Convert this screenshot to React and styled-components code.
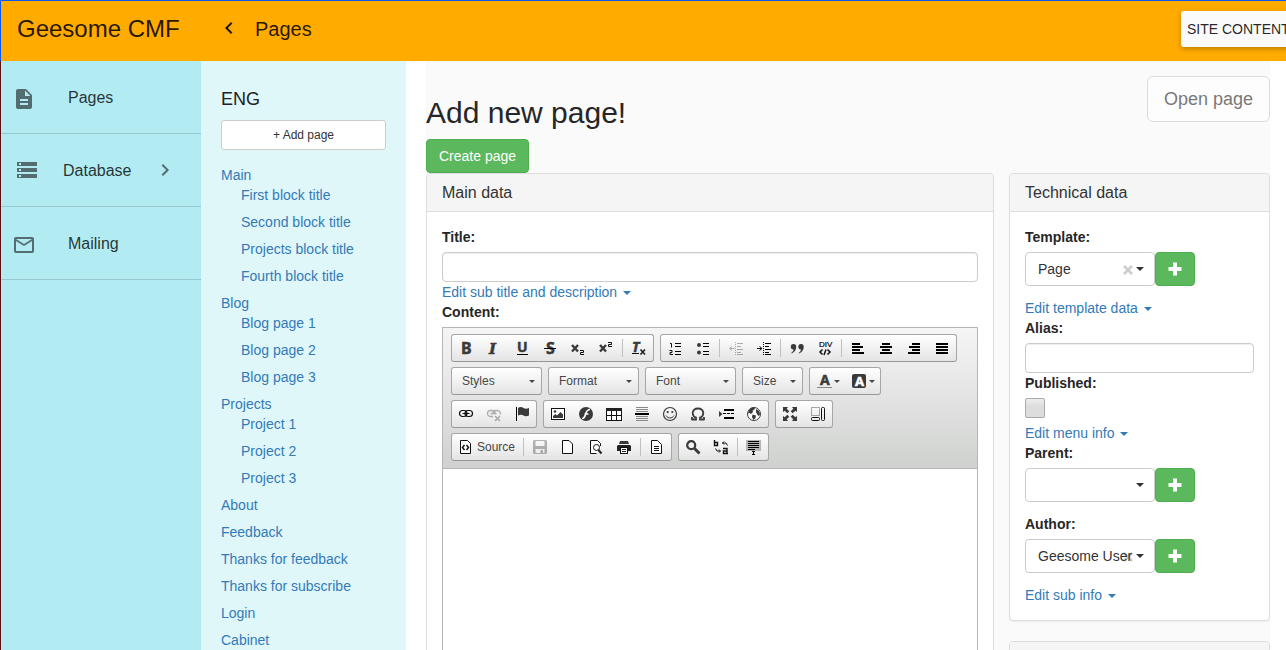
import React from "react";
import styled, { createGlobalStyle, css } from "styled-components";
import {
  MdChevronLeft,
  MdChevronRight,
  MdDescription,
  MdMailOutline,
  MdStorage,
} from "react-icons/md";

const GlobalStyle = createGlobalStyle`
  *, *::before, *::after { box-sizing: border-box; }
  body {
    margin: 0;
    background: #fff;
    color: #333;
    font: 14px/20px "Liberation Sans", Arial, sans-serif;
  }
  button, input, select, textarea { font: inherit; color: inherit; }
`;

/* ---------- shell ---------- */

const Shell = styled.div`
  display: flex;
  flex-direction: column;
  height: 100vh;
  overflow: hidden;
`;

const Header = styled.header`
  display: flex;
  flex: none;
  align-items: flex-start;
  height: 61px;
  overflow: hidden;
  border-top: 1px solid #0a58f5;
  border-left: 1px solid #0a58f5;
  background: #ffab00;
  color: rgba(0, 0, 0, 0.87);
`;

const Brand = styled.div`
  flex: 0 0 200px;
  padding-left: 16px;
  font-size: 24px;
  line-height: 56px;
`;

const BackButton = styled.button`
  display: flex;
  margin: 15px 14px 0 16px;
  padding: 0;
  border: 0;
  background: none;
  font-size: 24px;
`;

const HeaderTitle = styled.h1`
  flex: 1;
  margin: 0;
  font-size: 20px;
  font-weight: 400;
  line-height: 56px;
`;

const HeaderActions = styled.div`
  flex: 0 0 105px;
  min-width: 0;
  padding-top: 10px;
`;

const RaisedButton = styled.button`
  height: 36px;
  padding: 0 6px;
  border: 0;
  border-radius: 3px;
  background: #fafafa;
  box-shadow: 0 2px 5px rgba(0, 0, 0, 0.26);
  color: rgba(0, 0, 0, 0.87);
  white-space: nowrap;
`;

const Body = styled.div`
  display: flex;
  flex: 1;
  min-height: 0;
  border-left: 1px solid #5c1212;
`;

const scrollColumn = css`
  overflow-y: auto;
  scrollbar-width: none;
`;

/* ---------- primary navigation ---------- */

const Sidebar = styled.nav`
  flex: 0 0 200px;
  background: #b2ebf2;
  ${scrollColumn}
`;

const SideLink = styled.a`
  display: flex;
  align-items: center;
  height: 73px;
  padding-left: ${(p) => (p.$expandable ? 14 : 11)}px;
  border-bottom: 1px solid rgba(0, 0, 0, 0.14);
  color: rgba(0, 0, 0, 0.8);
  font-size: 16px;
  text-decoration: none;

  svg {
    flex: none;
    width: 24px;
    height: 24px;
    color: rgba(0, 0, 0, 0.54);
  }
`;

const SideIcon = styled.span`
  display: flex;
  padding-top: ${(p) => (p.$expandable ? 0 : 4)}px;
  margin-right: ${(p) => (p.$expandable ? 24 : 32)}px;
`;

const SideLabel = styled.span`
  width: 90px;
  padding-top: 2px;
`;

/* ---------- page tree ---------- */

const Tree = styled.nav`
  flex: 0 0 205px;
  padding: 28px 20px 0;
  background: #e0f7fa;
  ${scrollColumn}
`;

const TreeHeading = styled.h2`
  margin: 0 0 11px;
  color: #212121;
  font-size: 18px;
  font-weight: 400;
  line-height: 20px;
`;

const AddPageButton = styled.button`
  display: block;
  width: 100%;
  height: 30px;
  margin-bottom: 15px;
  border: 1px solid #ccc;
  border-radius: 3px;
  background: #fff;
  font-size: 12px;
  line-height: 18px;
`;

const TreeList = styled.ul`
  margin: 0;
  padding: 0 0 0 ${(p) => (p.$nested ? 20 : 0)}px;
  list-style: none;
`;

const TreeLink = styled.a`
  display: block;
  margin-bottom: ${(p) => (p.$parent ? 0 : 7)}px;
  color: #337ab7;
  text-decoration: none;
`;

/* ---------- content ---------- */

const Main = styled.main`
  flex: 1;
  min-width: 0;
  padding: 0 16px 0 20px;
  ${scrollColumn}
`;

const Content = styled.div`
  min-height: 100%;
  padding-top: 15px;
  background: #fafafa;
`;

const Intro = styled.div`
  display: flex;
  align-items: flex-start;
  justify-content: space-between;
`;

const PageTitle = styled.h2`
  margin: 20px 0 10px;
  color: #262626;
  font-size: 30px;
  font-weight: 400;
  line-height: 33px;
`;

const GreenButton = styled.button`
  display: flex;
  align-items: center;
  justify-content: center;
  min-width: 40px;
  height: 34px;
  padding: 0 12px;
  border: 1px solid #4cae4c;
  border-radius: 4px;
  background: #5cb85c;
  color: #fff;
`;

const OpenButton = styled.button`
  height: 46px;
  padding: 0 16px;
  border: 1px solid #ccc;
  border-radius: 6px;
  background: #fff;
  font-size: 18px;
  opacity: 0.65;
`;

const Columns = styled.div`
  display: grid;
  grid-template-columns: minmax(0, 1fr) 261px;
  gap: 15px;
  align-items: start;
`;

const Panel = styled.section`
  margin-bottom: 20px;
  border: 1px solid #ddd;
  border-radius: 4px;
  background: #fff;
  box-shadow: 0 1px 1px rgba(0, 0, 0, 0.05);
`;

const PanelHeading = styled.h3`
  min-height: 38px;
  margin: 0;
  padding: 10px 15px;
  border-bottom: 1px solid #ddd;
  border-radius: 3px 3px 0 0;
  background: #f5f5f5;
  font-size: 16px;
  font-weight: 400;
  line-height: 17px;
`;

const PanelBody = styled.div`
  padding: 15px;
`;

const Label = styled.label`
  display: block;
  margin-bottom: 5px;
  color: #262626;
  font-weight: 700;
`;

const TextInput = styled.input`
  display: block;
  width: 100%;
  height: 30px;
  padding: 4px 12px;
  border: 1px solid #ccc;
  border-radius: 4px;
  background: #fff;
  box-shadow: inset 0 1px 1px rgba(0, 0, 0, 0.075);
`;

const CheckBox = styled.input`
  display: block;
  appearance: none;
  width: 20px;
  height: 20px;
  margin: 0 0 5px;
  border: 1px solid #aaa;
  border-radius: 2px;
  background: linear-gradient(#eee, #ddd 40%, #ddd);
`;

const Caret = styled.span`
  display: inline-block;
  margin-left: 2px;
  vertical-align: middle;
  border-top: 4px solid;
  border-right: 4px solid transparent;
  border-left: 4px solid transparent;
`;

const Toggle = styled.a`
  display: block;
  color: #337ab7;
  text-decoration: none;
`;

const PickerRow = styled.div`
  display: flex;
  margin-bottom: 12px;
`;

const PickerBox = styled.div`
  position: relative;
  width: 130px;
  height: 34px;
  border: 1px solid #ccc;
  border-radius: 4px;
  background: #fff;

  > ${Caret} {
    position: absolute;
    top: 14px;
    right: 10px;
    pointer-events: none;
  }
`;

const Picker = styled.select`
  position: relative;
  appearance: none;
  width: 100%;
  height: 32px;
  padding: 0 20px 0 12px;
  border: 0;
  background: none;
`;

const ClearButton = styled.button`
  position: absolute;
  top: 11px;
  right: 20px;
  display: flex;
  padding: 0;
  border: 0;
  background: none;
  color: #ccc;
`;

/* ---------- rich text editor ---------- */

const Editor = styled.div`
  border: 1px solid #b6b6b6;
`;

const EditorToolbar = styled.div`
  display: flex;
  flex-direction: column;
  gap: 5px;
  padding: 6px 8px 7px;
  border-bottom: 1px solid #b6b6b6;
  background: linear-gradient(#f5f5f5, #cfd1cf);
`;

const ToolRow = styled.div`
  display: flex;
  gap: 6px;
`;

const ToolGroup = styled.div`
  display: flex;
  align-items: center;
  height: 28px;
  border: 1px solid #a6a6a6;
  border-bottom-color: #979797;
  border-radius: 3px;
  background: linear-gradient(#fff, #e4e4e4);
`;

const ToolButton = styled.button`
  display: flex;
  align-items: center;
  gap: 3px;
  height: 26px;
  padding: 0 6px;
  border: 0;
  background: none;
  color: #474747;
  font-size: 12px;

  svg { flex: none; width: 16px; height: 16px; overflow: visible; }
  &:disabled svg { opacity: 0.3; }
`;

const ToolDivider = styled.span`
  width: 1px;
  height: 18px;
  margin: 0 2px;
  background: #c0c0c0;
`;

const Combo = styled(ToolGroup)`
  width: ${(p) => p.$width}px;
  padding-right: 6px;
`;

const ComboSelect = styled.select`
  appearance: none;
  flex: 1;
  min-width: 0;
  height: 26px;
  padding: 0 0 0 10px;
  border: 0;
  background: none;
  color: #474747;
  font-size: 12px;
`;

const SmallArrow = styled.span`
  border-top: 3px solid #474747;
  border-right: 3px solid transparent;
  border-left: 3px solid transparent;
`;

const EditorArea = styled.textarea`
  display: block;
  width: 100%;
  height: 300px;
  padding: 20px;
  border: 0;
  outline: 0;
  resize: none;
`;

/* ---------- toolbar drawings, on a 16 × 16 grid ---------- */

const dark = "#3a3a3a";

const Letter = styled.text`
  font-family: ${(p) => (p.$serif ? '"DejaVu Serif", serif' : '"Noto Sans", sans-serif')};
  font-size: ${(p) => p.$size}px;
  font-style: ${(p) => (p.$italic ? "italic" : "normal")};
  font-weight: 700;
  line-height: 1;
  fill: ${(p) => p.$fill || dark};
  stroke: ${(p) => p.$fill || dark};
  stroke-width: 0.5px;
`;

const SmallLetters = styled.text`
  font-family: "Liberation Sans", sans-serif;
  font-size: 8px;
  line-height: 1;
  fill: #000;
  stroke: #000;
  stroke-width: 0.2px;
`;

const bars = (rows, fill = "#000", h = 2) =>
  rows.map(([x, y, w]) => <rect key={`${x}-${y}`} x={x} y={y} width={w} height={h} fill={fill} />);

const line = { fill: "none", stroke: "#111", strokeWidth: 1 };

const indentLines = (
  <>
    <path d="M7.5 2v13" stroke="#000" strokeDasharray="1 1" />
    {bars([[9, 3, 6], [9, 6, 4], [9, 9, 6], [9, 12, 4]], "#000", 1)}
    {bars([[9, 14, 6]], "#000", 1)}
  </>
);

const glyphs = {
  bold: <Letter x="3" y="14" $size={16}>B</Letter>,
  italic: <Letter x="3" y="14" $size={15} $serif $italic>I</Letter>,
  underline: (
    <>
      <Letter x="3" y="12" $size={14}>U</Letter>
      <rect x="3" y="14" width="11" height="1" fill="#000" />
    </>
  ),
  strike: (
    <>
      <Letter x="4" y="14" $size={16}>S</Letter>
      <rect x="2" y="8" width="12" height="1" fill="#000" />
    </>
  ),
  sub: (
    <>
      <path d="M2 5l6 6.500M8 5l-6 6.500" stroke={dark} strokeWidth="2.400" fill="none" />
      <path d="M10 10.500h3.500v2h-3v2H14" {...line} />
    </>
  ),
  sup: (
    <>
      <path d="M2 5l6 6.500M8 5l-6 6.500" stroke={dark} strokeWidth="2.400" fill="none" />
      <path d="M10 2.500h3.500v2h-3v2H14" {...line} />
    </>
  ),
  clear: (
    <>
      <Letter x="1" y="12" $size={14} $italic>T</Letter>
      <rect x="1" y="13" width="7" height="1" fill="#111" />
      <path d="M9.500 9.500l4.500 5M14 9.500l-4.500 5" stroke="#222" strokeWidth="1.700" />
    </>
  ),
  ordered: (
    <>
      <path d="M3 3.500h1.500v4M2.500 10.500h2.500v2h-2v2h3" {...line} />
      {bars([[8, 3, 6], [8, 6, 6], [8, 11, 6], [8, 14, 6]], "#000", 1)}
    </>
  ),
  unordered: (
    <>
      <circle cx="4" cy="5" r="2" fill={dark} />
      <circle cx="4" cy="12.500" r="2" fill={dark} />
      {bars([[8, 3, 6], [8, 6, 6], [8, 11, 6], [8, 14, 6]], "#000", 1)}
    </>
  ),
  outdent: (
    <>
      {indentLines}
      <path d="M1.500 8.500h5M4 6.500l-2.500 2 2.500 2" {...line} />
    </>
  ),
  indent: (
    <>
      {indentLines}
      <path d="M1 8.500h5M3.500 6.500l2.500 2-2.500 2" {...line} />
    </>
  ),
  quote: (
    <path
      d="M4.500 4a2.700 2.700 0 0 1 2.700 2.900c0 3-1.600 5-4.500 6.600l-.5-.7c1.400-1 2.200-2 2.300-3.400A2.700 2.700 0 0 1 4.500 4zM12 4a2.700 2.700 0 0 1 2.700 2.900c0 3-1.600 5-4.500 6.600l-.5-.7c1.400-1 2.200-2 2.300-3.400A2.700 2.700 0 0 1 12 4z"
      fill={dark}
    />
  ),
  div: (
    <>
      <SmallLetters x="2" y="7">DIV</SmallLetters>
      <path d="M5.500 9.500L3 12l2.500 2.500M10.500 9.500L13 12l-2.500 2.500M9 9.500l-2 5.500" {...line} strokeWidth="1.500" />
    </>
  ),
  left: bars([[2, 3, 8], [2, 6, 11], [2, 9, 8], [2, 12, 12]]),
  center: bars([[4, 3, 8], [2, 6, 12], [4, 9, 8], [2, 12, 12]]),
  right: bars([[6, 3, 8], [3, 6, 11], [6, 9, 8], [2, 12, 12]]),
  justify: bars([[2, 3, 12], [2, 6, 12], [2, 9, 12], [2, 12, 12]]),
  link: (
    <>
      <rect x="1.500" y="4.500" width="7.500" height="6" rx="3" fill="none" stroke="#111" strokeWidth="1.200" />
      <rect x="7" y="4.500" width="7.500" height="6" rx="3" fill="none" stroke="#111" strokeWidth="1.200" />
      <path d="M4.500 7.500h7" stroke="#111" strokeWidth="1" />
    </>
  ),
  unlink: (
    <>
      <path d="M7 10.500H4.500a3 3 0 0 1 0-6h1.500a3 3 0 0 1 3 3M7 7.500a3 3 0 0 1 3-3h1.500a3 3 0 0 1 2.800 4M4.500 7.500h6" fill="none" stroke="#111" strokeWidth="1.300" />
      <path d="M9 10l5 5M14 10l-5 5" stroke="#111" strokeWidth="1.600" />
    </>
  ),
  flag: (
    <>
      <rect x="2" y="1" width="1" height="14" fill="#000" />
      <path d="M4 2c2-1.500 4-1 5.500 0s3.500 1 5.500 0v7.500c-2 1-4 1-5.500 0S6 8.500 4 9.500z" fill={dark} />
    </>
  ),
  image: (
    <>
      <rect x="1.500" y="2.500" width="13" height="11" {...line} fill="#fff" />
      <circle cx="5" cy="5.500" r="1.300" fill={dark} />
      <path d="M3 12V10l2.500-2L7 9.500 10.500 6 13 8.500V12z" fill={dark} />
    </>
  ),
  flash: (
    <>
      <circle cx="8" cy="8" r="7" fill={dark} />
      <path d="M12 3.500c-3 0-3.500 2-4.200 4.200S6.500 12.500 4 12.500M6.500 8h4" fill="none" stroke="#fff" strokeWidth="1.700" />
    </>
  ),
  table: (
    <>
      <rect x=".5" y="2.500" width="15" height="12" {...line} fill="#fff" />
      <rect x="0" y="2" width="16" height="3" fill="#222" />
      <path d="M5.500 5v9.500M10.500 5v9.500M.5 9.500h15" {...line} />
    </>
  ),
  rule: (
    <>
      {bars([[2, 1, 12], [2, 3, 12], [2, 5, 12], [2, 10, 12], [2, 12, 12], [2, 14, 12]], "#888", 1)}
      {bars([[1, 7, 14]])}
    </>
  ),
  smiley: (
    <>
      <circle cx="8" cy="8" r="6.500" fill="none" stroke={dark} strokeWidth="1.200" />
      <circle cx="5.700" cy="6" r="1.100" fill={dark} />
      <circle cx="10.300" cy="6" r="1.100" fill={dark} />
      <path d="M4 9.500c2 3.300 6 3.300 8 0" fill="none" stroke={dark} />
    </>
  ),
  omega: (
    <path
      d="M1.500 13.500h4.500v-1.800A5.200 5.200 0 0 1 2.700 7.200C2.700 4.300 5 2.500 8 2.500s5.300 1.800 5.300 4.700a5.200 5.200 0 0 1-3.300 4.500v1.800h4.500M2 11v3M14 11v3"
      fill="none"
      stroke={dark}
      strokeWidth="1.800"
    />
  ),
  pagebreak: (
    <>
      <path d="M1 5l3.500 3L1 11z" fill={dark} />
      {bars([[6, 3, 10], [6, 11, 10]])}
      {bars([[5, 7, 3], [9, 7, 3], [13, 7, 3]], "#000", 1)}
    </>
  ),
  globe: (
    <>
      <circle cx="8" cy="8" r="6.500" fill="#fff" stroke={dark} />
      <path d="M3 4l3-2.500 3 .5-1 2-1.500.5.500 1.500L5 8 3.500 7 2 7.500zM10 3l3 2 1 3-1 2-1.500-1-1.500-3zM6.500 8.500l3.500 1-.5 2.500L7.500 14 6 11z" fill={dark} />
    </>
  ),
  maximize: (
    <path
      d="M1 1h5L4.700 2.700l2.600 2.600-2 2-2.600-2.600L1 6zM15 1v5l-1.700-1.300-2.600 2.600-2-2 2.600-2.600L10 1zM1 15v-5l1.700 1.300 2.600-2.600 2 2-2.600 2.600L6 15zM15 15h-5l1.300-1.700-2.600-2.600 2-2 2.600 2.600L15 10z"
      fill={dark}
    />
  ),
  blocks: (
    <>
      <path d="M1.500 1.500h8v8h-8z" fill="none" stroke="#555" strokeDasharray="1 1" />
      <rect x="11.500" y="1.500" width="3" height="13" rx="1" {...line} />
      <rect x="1.500" y="11.500" width="8" height="3" rx="1" {...line} />
    </>
  ),
  source: (
    <>
      <path d="M2.500 1.500h7l3 3v10h-10z" {...line} fill="#fff" />
      <path d="M6.500 6L4.500 8.500l2 2.500M8.500 6l2 2.500-2 2.500" {...line} strokeWidth="1.500" />
    </>
  ),
  save: (
    <path
      fillRule="evenodd"
      d="M2 1h12l1 1v12l-1 1H2l-1-1V2zM3.500 2v5h9V2zM3.500 10v4h9v-4zM8.500 11h2.500v3H8.500z"
      fill="#111"
    />
  ),
  blank: <path d="M2.500 1.500h6.500l3.500 3.500v9.500h-10z" {...line} fill="#fff" />,
  preview: (
    <>
      <path d="M12.500 7V4.500l-3-3h-7v13h6" {...line} fill="#fff" />
      <circle cx="8.500" cy="8.500" r="3" {...line} />
      <path d="M10.500 11l3 3.500" stroke="#222" strokeWidth="2" />
    </>
  ),
  print: (
    <>
      <path d="M4 2h8l1 3H3z" fill={dark} />
      <path d="M1 7l1-1h12l1 1v5h-3V8H4v4H1z" fill="#222" />
      <rect x="4.500" y="8.500" width="7" height="6" {...line} fill="#fff" />
      {bars([[6, 10, 4], [6, 12, 4]], "#222", 1)}
    </>
  ),
  templates: (
    <>
      <path d="M2.500 1.500h6l4 4v9h-10z" {...line} fill="#fff" />
      {bars([[5, 7, 5], [5, 9, 5], [5, 11, 5]], "#111", 1)}
    </>
  ),
  find: (
    <>
      <circle cx="6.200" cy="6.200" r="4" fill="none" stroke={dark} strokeWidth="2.200" />
      <path d="M9.500 9.500l5 5" stroke={dark} strokeWidth="3" />
    </>
  ),
  replace: (
    <>
      <path d="M1.500 1v5.500h3v-3h-3M10 9.500h4v5h-3.500v-2.500H14v2.500h1" {...line} strokeWidth="1.400" />
      <path d="M14.500 6.500l-1.500-2.500H9.500M11 2.500L9.500 4 11 5.500M2.500 9.500L4 12h3M6 10.500l1.500 1.500L6 13.500" {...line} />
    </>
  ),
  selectall: (
    <>
      <rect x="0" y="1" width="15" height="11" fill="#b5b5b5" />
      {bars([[2, 2, 11], [2, 4, 11], [2, 6, 11], [2, 8, 11], [2, 10, 7]], "#000", 1)}
      <path d="M6 12.500h3M7.500 12.500v3M6 15.500h3" stroke="#000" fill="none" />
    </>
  ),
  textcolor: (
    <>
      <Letter x="4" y="12" $size={14}>A</Letter>
      <rect x="1" y="14" width="15" height="1" fill="#888" />
    </>
  ),
  bgcolor: (
    <>
      <rect x="1" y="1" width="14" height="14" rx="2" fill={dark} />
      <Letter x="4" y="13" $size={13} $fill="#fff">A</Letter>
    </>
  ),
};

const Glyph = ({ name }) => (
  <svg viewBox="0 0 16 16" aria-hidden="true">{glyphs[name]}</svg>
);

const Tool = ({ name, disabled, children }) => (
  <ToolButton type="button" aria-label={name} disabled={disabled}>
    <Glyph name={name} />
    {children}
  </ToolButton>
);

const disabledTools = ["outdent", "unlink", "save"];

const Tools = ({ names }) => (
  <ToolGroup>
    {names.map((name, i) =>
      name === "|" ? (
        <ToolDivider key={i} />
      ) : (
        <Tool key={name} name={name} disabled={disabledTools.includes(name)}>
          {name === "source" ? "Source" : null}
        </Tool>
      )
    )}
  </ToolGroup>
);

const ColorTool = styled(ToolButton)`
  gap: 2px;
  padding: 0 5px 0 6px;
`;

const Dropdown = ({ label, width }) => (
  <Combo $width={width}>
    <ComboSelect aria-label={label}>
      <option>{label}</option>
    </ComboSelect>
    <SmallArrow />
  </Combo>
);

const RichEditor = () => (
  <Editor>
    <EditorToolbar>
      <ToolRow>
        <Tools names={["bold", "italic", "underline", "strike", "sub", "sup", "|", "clear"]} />
        <Tools
          names={["ordered", "unordered", "|", "outdent", "indent", "|", "quote", "div", "|", "left", "center", "right", "justify"]}
        />
      </ToolRow>
      <ToolRow>
        <Dropdown label="Styles" width={91} />
        <Dropdown label="Format" width={91} />
        <Dropdown label="Font" width={91} />
        <Dropdown label="Size" width={61} />
        <ToolGroup>
          {["textcolor", "bgcolor"].map((name) => (
            <ColorTool key={name} type="button" aria-label={name}>
              <Glyph name={name} />
              <SmallArrow />
            </ColorTool>
          ))}
        </ToolGroup>
      </ToolRow>
      <ToolRow>
        <Tools names={["link", "unlink", "flag"]} />
        <Tools names={["image", "flash", "table", "rule", "smiley", "omega", "pagebreak", "globe"]} />
        <Tools names={["maximize", "blocks"]} />
      </ToolRow>
      <ToolRow>
        <Tools names={["source", "|", "save", "blank", "preview", "print", "|", "templates"]} />
        <Tools names={["find", "replace", "|", "selectall"]} />
      </ToolRow>
    </EditorToolbar>
    <EditorArea id="content" />
  </Editor>
);

/* ---------- form pieces ---------- */

const EditLink = ({ children }) => (
  <Toggle href="#">
    {children} <Caret />
  </Toggle>
);

const PickerField = ({ id, label, value, clearable }) => (
  <>
    <Label htmlFor={id}>{label}</Label>
    <PickerRow>
      <PickerBox>
        {clearable && (
          <ClearButton type="button" aria-label="Clear">
            <svg width="12" height="12" viewBox="0 0 12 12">
              <path d="M2 2l8 8M10 2l-8 8" stroke="currentColor" strokeWidth="2.500" />
            </svg>
          </ClearButton>
        )}
        <Picker id={id}>
          <option>{value}</option>
        </Picker>
        <Caret />
      </PickerBox>
      <GreenButton type="button" aria-label={`Add ${id}`}>
        <svg width="14" height="14" viewBox="0 0 14 14">
          <path d="M7 0.500v13M0.500 7h13" stroke="#fff" strokeWidth="4" />
        </svg>
      </GreenButton>
    </PickerRow>
  </>
);

const pages = [
  { title: "Main", children: ["First block title", "Second block title", "Projects block title", "Fourth block title"] },
  { title: "Blog", children: ["Blog page 1", "Blog page 2", "Blog page 3"] },
  { title: "Projects", children: ["Project 1", "Project 2", "Project 3"] },
  { title: "About" },
  { title: "Feedback" },
  { title: "Thanks for feedback" },
  { title: "Thanks for subscribe" },
  { title: "Login" },
  { title: "Cabinet" },
];

const sections = [
  { label: "Pages", Icon: MdDescription },
  { label: "Database", Icon: MdStorage, expandable: true },
  { label: "Mailing", Icon: MdMailOutline },
];

export default function App() {
  return (
    <Shell>
      <GlobalStyle />
      <Header>
        <Brand>Geesome CMF</Brand>
        <BackButton type="button" aria-label="Back">
          <MdChevronLeft />
        </BackButton>
        <HeaderTitle>Pages</HeaderTitle>
        <HeaderActions>
          <RaisedButton type="button">SITE CONTENT</RaisedButton>
        </HeaderActions>
      </Header>
      <Body>
        <Sidebar>
          {sections.map(({ label, Icon, expandable }) => (
            <SideLink key={label} href="#" $expandable={expandable}>
              <SideIcon $expandable={expandable}>
                <Icon />
              </SideIcon>
              <SideLabel>{label}</SideLabel>
              {expandable && <MdChevronRight />}
            </SideLink>
          ))}
        </Sidebar>
        <Tree>
          <TreeHeading>ENG</TreeHeading>
          <AddPageButton type="button">+ Add page</AddPageButton>
          <TreeList>
            {pages.map(({ title, children }) => (
              <li key={title}>
                <TreeLink href="#" $parent={Boolean(children)}>{title}</TreeLink>
                {children && (
                  <TreeList $nested>
                    {children.map((child) => (
                      <li key={child}>
                        <TreeLink href="#">{child}</TreeLink>
                      </li>
                    ))}
                  </TreeList>
                )}
              </li>
            ))}
          </TreeList>
        </Tree>
        <Main>
          <Content>
            <Intro>
              <div>
                <PageTitle>Add new page!</PageTitle>
                <GreenButton type="button">Create page</GreenButton>
              </div>
              <OpenButton type="button">Open page</OpenButton>
            </Intro>
            <Columns>
              <Panel>
                <PanelHeading>Main data</PanelHeading>
                <PanelBody>
                  <Label htmlFor="title">Title:</Label>
                  <TextInput id="title" type="text" />
                  <EditLink>Edit sub title and description</EditLink>
                  <Label htmlFor="content">Content:</Label>
                  <RichEditor />
                </PanelBody>
              </Panel>
              <div>
                <Panel>
                  <PanelHeading>Technical data</PanelHeading>
                  <PanelBody>
                    <PickerField id="template" label="Template:" value="Page" clearable />
                    <EditLink>Edit template data</EditLink>
                    <Label htmlFor="alias">Alias:</Label>
                    <TextInput id="alias" type="text" />
                    <Label htmlFor="published">Published:</Label>
                    <CheckBox id="published" type="checkbox" />
                    <EditLink>Edit menu info</EditLink>
                    <PickerField id="parent" label="Parent:" value="" />
                    <PickerField id="author" label="Author:" value="Geesome User" clearable />
                    <EditLink>Edit sub info</EditLink>
                  </PanelBody>
                </Panel>
                <Panel>
                  <PanelHeading />
                  <PanelBody />
                </Panel>
              </div>
            </Columns>
          </Content>
        </Main>
      </Body>
    </Shell>
  );
}
